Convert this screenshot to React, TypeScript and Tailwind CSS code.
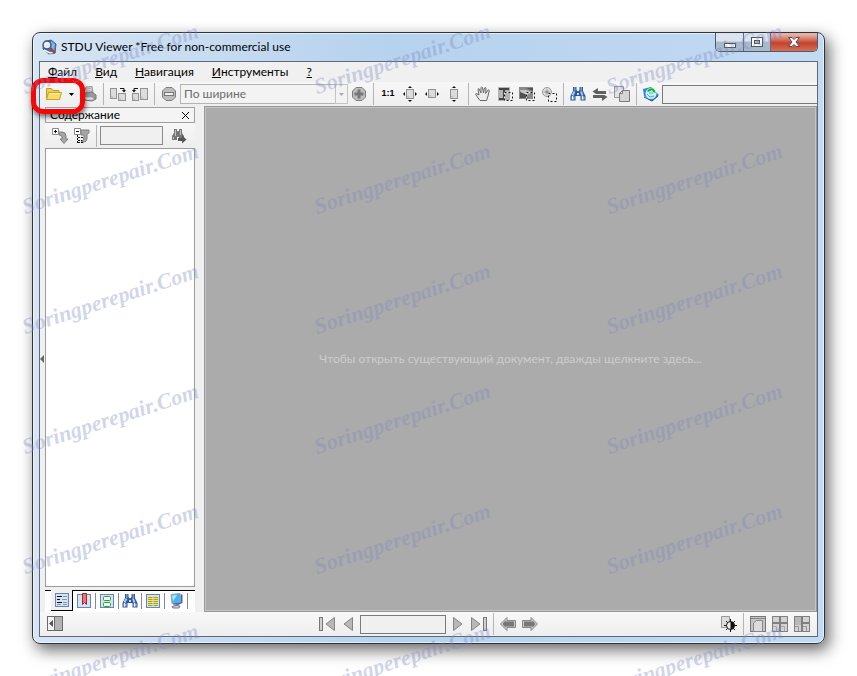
import type { ReactNode } from "react";

const watermarkRows = [0, 1, 2, 3, 4, 5];
const watermarkColumns = [0, 1, 2];

interface IconProps {
  children: ReactNode;
}

function Icon({ children }: IconProps) {
  return (
    <svg
      width="16"
      height="16"
      viewBox="0 0 16 16"
      fill="none"
      className="shrink-0"
      aria-hidden="true"
    >
      {children}
    </svg>
  );
}

interface ToolButtonProps {
  label: string;
  children: ReactNode;
}

function ToolButton({ label, children }: ToolButtonProps) {
  return (
    <button
      type="button"
      aria-label={label}
      className="flex h-6 w-[22px] shrink-0 items-center justify-center"
    >
      {children}
    </button>
  );
}

function Separator() {
  return (
    <div className="flex h-6 w-[7px] shrink-0 justify-center py-px">
      <div className="w-px bg-[#b5b5b5]" />
    </div>
  );
}

function Binoculars() {
  return (
    <Icon>
      <path d="M3 1h3.500v3L8 5.500 9.500 4V1H13v4l2.500 5v4.500h-5V10h-5v4.500h-5V10L3 5z" fill="#2d569c" />
      <path d="M4 2h1.500M10.500 2H12M4 4h1.500M10.500 4H12" stroke="#c4d8f4" />
      <path d="M4.500 5.500 2.500 9.500M11 5.500l1.500 4" stroke="#a9c8f2" strokeWidth="2" />
      <path d="M1.500 10.500h3v3h-3zM11.500 10.500h3v3h-3z" fill="#9bb8e2" />
      <path d="M2.500 10v3.500M12.500 10v3.500" stroke="#f4f8ff" />
      <path d="M7 7h2v2H7z" fill="#c9dbf4" />
    </Icon>
  );
}

function PageShape({ x, y, w, h }: { x: number; y: number; w: number; h: number }) {
  return (
    <>
      <rect x={x} y={y} width={w} height={h} fill="#dcdcdc" stroke="#929292" />
      <path d={`M${x + 1} ${y + h - 1}v-2l2 2z`} fill="#aaa" />
    </>
  );
}

function Marquee({ x, y }: { x: number; y: number }) {
  return (
    <>
      <rect x={x} y={y} width="8" height="8" stroke="#f4f4f4" />
      <rect x={x} y={y} width="8" height="8" stroke="#111" strokeDasharray="2 2" />
    </>
  );
}

function ZoomCircle({ plus }: { plus?: boolean }) {
  return (
    <Icon>
      <path
        d="M5 1.500h6L14.500 5v6L11 14.500H5L1.500 11V5z"
        fill="#bdbdbd"
        stroke="#7d7d7d"
      />
      {plus ? (
        <path d="M3.500 8h9M8 3.500v9" stroke="#777" strokeWidth="3" />
      ) : (
        <>
          <path d="M3 8h10" stroke="#777" strokeWidth="4" />
          <path d="M4 8h8" stroke="#efefef" strokeWidth="2" />
        </>
      )}
    </Icon>
  );
}

function AppLogo() {
  return (
    <Icon>
      <path d="m3 3 7-2 5 4-1 9-6 1-6-5z" fill="#3d78bb" stroke="#3a5f92" />
      <path d="m10 2 4 3-1 8-3-2z" fill="#7cb8ea" />
      <path d="m3 11 6 3 5-1" stroke="#eef3f8" strokeWidth="1.500" />
      <path d="m9 9 5 5" stroke="#a8442f" strokeWidth="2.500" />
      <circle cx="6" cy="6" r="4" fill="#dceefb" stroke="#4c5274" strokeWidth="1.500" />
      <path d="M4 5.500q1-2 3-1.500" stroke="#fff" />
    </Icon>
  );
}

function TitleBar() {
  return (
    <header className="flex h-7 shrink-0 items-center pl-0.5">
      <AppLogo />
      <h1 className="ml-1 flex-1 text-xs whitespace-nowrap">
        STDU Viewer *Free for non-commercial use
      </h1>
      <div className="flex h-[19px] self-start overflow-hidden rounded-b-[5px] border border-t-0 border-[#4b5a6c]">
        <button
          type="button"
          aria-label="Свернуть"
          className="flex w-7 items-center justify-center border-r border-[#5d6e83] bg-linear-to-b from-[#dbe4ee] from-45% to-[#a9b9cc] to-50% pt-1"
        >
          <svg width="12" height="10" viewBox="0 0 12 10" aria-hidden="true">
            <rect x=".5" y="4.500" width="11" height="4" fill="#fff" stroke="#4b5364" />
          </svg>
        </button>
        <button
          type="button"
          aria-label="Развернуть"
          className="flex w-[27px] items-center justify-center border-r border-[#5d6e83] bg-linear-to-b from-[#dbe4ee] from-45% to-[#a9b9cc] to-50%"
        >
          <svg width="12" height="10" viewBox="0 0 12 10" aria-hidden="true">
            <rect x=".5" y=".5" width="11" height="9" fill="#fff" stroke="#4b5364" />
            <rect x="3.500" y="3.500" width="5" height="3" fill="#a9b9cc" stroke="#4b5364" />
          </svg>
        </button>
        <button
          type="button"
          aria-label="Закрыть"
          className="flex w-[46px] items-center justify-center bg-linear-to-b from-[#e6b0a5] from-10% via-[#c4412c] via-55% to-[#d66f55]"
        >
          <svg width="12" height="10" viewBox="0 0 12 10" aria-hidden="true">
            <path
              d="M.500.500h3.500l2 2 2-2h3.500L8 5l3.500 4.500H8l-2-2-2 2H.500L4 5z"
              fill="#fff"
              stroke="#5a4a56"
            />
          </svg>
        </button>
      </div>
    </header>
  );
}

function MenuBar() {
  return (
    <nav className="flex h-5 shrink-0 items-center gap-[18px] pl-2 text-xs">
      <a href="#file"><u>Ф</u>айл</a>
      <a href="#view"><u>В</u>ид</a>
      <a href="#navigation"><u>Н</u>авигация</a>
      <a href="#tools"><u>И</u>нструменты</a>
      <a href="#help"><u>?</u></a>
    </nav>
  );
}

function OpenButton() {
  return (
    <div className="relative ml-[3px] flex shrink-0">
      <ToolButton label="Открыть">
        <Icon>
          <path d="M.500 13.500v-11h5l1.500 2h6v9z" fill="#f0cf52" stroke="#c59a1e" />
          <path d="m.500 13.500 2-7h13l-2 7z" fill="#f8dc68" stroke="#cda128" />
          <path d="M3.500 7.500h10" stroke="#fff3b8" />
        </Icon>
      </ToolButton>
      <button
        type="button"
        aria-label="Недавние файлы"
        className="flex w-[13px] items-center justify-center"
      >
        <svg width="5" height="3" viewBox="0 0 5 3" aria-hidden="true">
          <path d="M0 0h5L2.500 3z" fill="#000" />
        </svg>
      </button>
      <div className="pointer-events-none absolute -top-1 -left-3 z-10 h-9 w-[54px] rounded-xl border-[5px] border-[#f80606] shadow-[1px_3px_4px_rgba(0,0,0,0.5)]" />
    </div>
  );
}

function Toolbar() {
  return (
    <div className="flex h-6 shrink-0 items-center bg-linear-to-b from-[#f7f7f7] to-[#eeeeee]">
      <OpenButton />
      <ToolButton label="Печать">
        <Icon>
          <path d="m3 7 2-6 6-.500 1 6.500" fill="#d6d6d6" stroke="#909090" />
          <path d="m5 3 5-.500M5 5h6" stroke="#aaa" />
          <path d="M1 7.500 11 6l4 3v4l-4 2-8-1-2-2z" fill="#9a9a9a" stroke="#757575" />
          <path d="m4 11 7 .500 2 2-8 .500z" fill="#e0e0e0" />
        </Icon>
      </ToolButton>
      <Separator />
      <ToolButton label="Повернуть вправо">
        <Icon>
          <PageShape x={0.5} y={2.5} w={6} h={10} />
          <PageShape x={8.5} y={7.5} w={7} h={7} />
          <path d="M10 2.500h4v3" stroke="#111" />
          <path d="M12 4h4l-2 2.500z" fill="#111" />
        </Icon>
      </ToolButton>
      <ToolButton label="Повернуть влево">
        <Icon>
          <PageShape x={0.5} y={7.5} w={6} h={7} />
          <PageShape x={8.5} y={2.5} w={7} h={11} />
          <path d="M6 2.500H2v3" stroke="#111" />
          <path d="M0 4h4L2 6.500z" fill="#111" />
        </Icon>
      </ToolButton>
      <Separator />
      <ToolButton label="Уменьшить">
        <ZoomCircle />
      </ToolButton>
      <div className="relative flex h-5 w-[168px] shrink-0">
        <select
          aria-label="Масштаб"
          className="w-full appearance-none border border-[#b4b4b4] bg-[#f3f3f3] pl-[3px] text-xs text-[#6d6d6d]"
        >
          <option>По ширине</option>
        </select>
        <span className="pointer-events-none absolute inset-y-0 right-0 flex w-[13px] items-center justify-center border border-[#c4c4c4]">
          <svg width="5" height="3" viewBox="0 0 5 3" aria-hidden="true">
            <path d="M0 0h5L2.500 3z" fill="#aaa" />
          </svg>
        </span>
      </div>
      <ToolButton label="Увеличить">
        <ZoomCircle plus />
      </ToolButton>
      <Separator />
      <ToolButton label="Реальный размер">
        <span className="font-['Liberation_Sans',sans-serif] text-[9px] font-bold">
          1:1
        </span>
      </ToolButton>
      <ToolButton label="По размеру страницы">
        <Icon>
          <PageShape x={4.5} y={3.5} w={7} h={9} />
          <path d="M8 0 6 2h4zM8 16l-2-2h4zM1 8l2-2v4zM15 8l-2-2v4z" fill="#111" />
        </Icon>
      </ToolButton>
      <ToolButton label="По ширине">
        <Icon>
          <PageShape x={4.5} y={3.5} w={7} h={8} />
          <path d="m1 8 2-2v4zM15 8l-2-2v4z" fill="#111" />
        </Icon>
      </ToolButton>
      <ToolButton label="По высоте">
        <Icon>
          <PageShape x={4.5} y={3.5} w={7} h={9} />
          <path d="M8 0 6 2h4zM8 16l-2-2h4z" fill="#111" />
        </Icon>
      </ToolButton>
      <Separator />
      <ToolButton label="Рука">
        <Icon>
          <path
            d="M5 14.500 1 9q-1-1.500.500-1.500L4 9 3 3.500q0-1 1-.800L6 7V1.500q.500-1 1.500 0L8.500 7l1-5q1-1 1.500 0l-.300 5.500L13 4q1-.500 1.300.500L13 10l-1.500 4.500z"
            fill="#ececec"
            stroke="#666"
          />
        </Icon>
      </ToolButton>
      <ToolButton label="Выделить текст">
        <Icon>
          <rect x="1" y="1" width="12" height="14" fill="#b4b4b4" />
          <path d="M2 3h10M7 3v10M2 13h5" stroke="#444" strokeWidth="2" />
          <Marquee x={7.500} y={6.500} />
        </Icon>
      </ToolButton>
      <ToolButton label="Выделить изображение">
        <Icon>
          <rect y="1" width="14" height="12" fill="#8a8a8a" />
          <path d="M1 4h6l6 2-5 3 2 3-7-3z" fill="#c6c6c6" />
          <path d="m1 6 5 2 4 4H1zM7 2h7v3z" fill="#505050" />
          <Marquee x={7.500} y={6.500} />
        </Icon>
      </ToolButton>
      <ToolButton label="Увеличить область">
        <Icon>
          <circle cx="6" cy="6" r="4.500" fill="#dcdcdc" stroke="#999" />
          <path d="M3.500 6h5M6 3.500v5" stroke="#777" />
          <Marquee x={7.500} y={7.500} />
        </Icon>
      </ToolButton>
      <Separator />
      <ToolButton label="Найти">
        <Binoculars />
      </ToolButton>
      <ToolButton label="Перейти">
        <Icon>
          <path d="M6 2v3h8v3H6v1.500L.500 5.500zM10 15v-3H1V9h9V7.500l5.500 3.500z" fill="#606060" />
          <path d="M2 8.500h12" stroke="#f0f0f0" />
        </Icon>
      </ToolButton>
      <ToolButton label="Копировать">
        <Icon>
          <path d="M.500.500h9v11h-9z" fill="#e2e2e2" stroke="#999" />
          <path d="M5.500 7.500l3-3h7v11h-10z" fill="#d4d4d4" stroke="#7b7b7b" />
          <path d="M8.500 4.500v3h-3z" fill="#f8f8f8" stroke="#7b7b7b" />
        </Icon>
      </ToolButton>
      <Separator />
      <ToolButton label="Перевод">
        <Icon>
          <path d="m0 3 8-2 8 8-7 6-8-5z" fill="#2b87d0" />
          <path d="m1 11 8 4 6-5" stroke="#1f4f86" />
          <circle cx="8" cy="7.500" r="5.500" fill="#c6f1fb" />
          <path d="M4 5q3-4 7-2l2 4-3-1-1-2-4 2z" fill="#16b516" />
          <path d="m4 8 3 3 4-1M6 7h4" stroke="#45b0cf" />
        </Icon>
      </ToolButton>
      <input
        type="text"
        aria-label="Слово для перевода"
        className="h-[19px] min-w-0 flex-1 border border-r-0 border-[#7a7a7a] bg-[#f0f0f0] px-1 text-xs"
      />
    </div>
  );
}

function TabIcon({ children }: { children: ReactNode }) {
  return (
    <Icon>
      <rect x="1.500" y="1.500" width="13" height="13" fill="#d5e3f6" stroke="#6485b8" />
      {children}
    </Icon>
  );
}

const panelTabs = [
  {
    label: "Закладки",
    icon: (
      <TabIcon>
        <path d="M6.500.500h4v11l-2-2-2 2z" fill="#e87878" stroke="#a82424" />
      </TabIcon>
    ),
  },
  {
    label: "Эскизы",
    icon: (
      <TabIcon>
        <rect x="4.500" y="3.500" width="7" height="4" rx="1" fill="#f2fff0" stroke="#28a428" />
        <rect x="4.500" y="9.500" width="7" height="4" rx="1" fill="#f2fff0" stroke="#28a428" />
      </TabIcon>
    ),
  },
  { label: "Поиск", icon: <Binoculars /> },
  {
    label: "Выделения",
    icon: (
      <TabIcon>
        <path d="M3 3h10v10H3z" fill="#f7ea3c" />
        <path d="M3 4.500h10M3 6.500h10M3 8.500h10M3 10.500h10M3 12.500h10" stroke="#a19a58" />
        <path d="M8 3v10" stroke="#d5e3f6" />
      </TabIcon>
    ),
  },
  {
    label: "Компьютер",
    icon: (
      <Icon>
        <path d="m3 1.500 9-1 1.500 9L4 10.500z" fill="#48b4ee" stroke="#8fa0c8" />
        <path d="m4 2.500 5-.500-4 6z" fill="#b5e6fb" />
        <path d="m13 1 1.500 1v8L10 12l-5-.500v-1l8-1z" fill="#57609a" />
        <path d="M4 13.500q4-2 8-.500l-1 2H5z" fill="#d0d0dc" stroke="#777a9a" />
      </Icon>
    ),
  },
];

function ContentsPanel() {
  return (
    <aside className="flex w-[150px] shrink-0 flex-col">
      <div className="mt-px flex h-4 shrink-0 items-center border border-[#a0a0a0] bg-[#f4f4f4] pr-1 pl-1">
        <h2 className="flex-1 text-xs leading-[14px]">Содержание</h2>
        <button type="button" aria-label="Закрыть панель">
          <svg width="9" height="9" viewBox="0 0 9 9" aria-hidden="true">
            <path d="m1 1 7 7M8 1 1 8" stroke="#000" />
          </svg>
        </button>
      </div>
      <div className="flex h-[25px] shrink-0 items-center bg-linear-to-b from-[#f7f7f7] to-[#eeeeee] pl-1">
        <ToolButton label="Развернуть всё">
          <Icon>
            <path d="M7 4h3q4 0 4 4v3h2l-4 4.500L8 11h2V9q0-2-3-2z" fill="#a6a6a6" stroke="#808080" />
            <path d="M.500.500h6v6h-6z" fill="#fff" stroke="#888" />
            <path d="M2 3.500h3M3.500 2v3" stroke="#111" />
          </Icon>
        </ToolButton>
        <ToolButton label="Свернуть всё">
          <Icon>
            <path d="M7 2h8v3l-2 1v5q-1 4-6 3 3-2 3-5V7H7z" fill="#a6a6a6" stroke="#808080" />
            <path d="M.500.500h6v6h-6z" fill="#fff" stroke="#888" />
            <path d="M2 3.500h3" stroke="#111" />
            <path d="M3.500 7v8M4 9.500h5M4 12.500h4M4 14.500h6" stroke="#111" strokeDasharray="2 1" />
          </Icon>
        </ToolButton>
        <Separator />
        <input
          type="text"
          aria-label="Поиск в содержании"
          className="h-[19px] w-[63px] border border-[#8a8a8a] bg-[#f0f0f0] px-1 text-xs"
        />
        <div className="flex flex-1 justify-center">
          <ToolButton label="Найти далее">
            <Icon>
              <path d="M3 1h3v2h2V1h3v4l2 3v4H8V9H6v3H1V8l2-3z" fill="#777" />
              <path d="M4.500 2v6M9.500 2v5M2.500 9v2" stroke="#c2c2c2" />
              <path d="M7 10h4V7.500l4.500 4-4.500 4V13H7z" fill="#555" />
            </Icon>
          </ToolButton>
        </div>
      </div>
      <div className="flex-1 border border-[#9c9c9c] bg-white" />
      <div className="mt-[3px] flex h-[22px] shrink-0 items-start bg-white">
        <div className="h-px w-1.5 bg-black" />
        <button
          type="button"
          aria-label="Содержание"
          className="flex h-[21px] w-[22px] items-center justify-center border-r border-b border-black bg-[#f0f0f0]"
        >
          <TabIcon>
            <path d="M3 4.500h5M3 7.500h3M3 10.500h5" stroke="#111" />
            <path d="M3 12.500h4M9 4.500h4M8 7.500h5M9 10.500h4M9 12.500h4" stroke="#8a94a5" />
          </TabIcon>
        </button>
        <div className="flex h-[21px] flex-1 border-t border-black">
          {panelTabs.map((tab) => (
            <button
              key={tab.label}
              type="button"
              aria-label={tab.label}
              className="flex w-[23px] items-center justify-center"
            >
              <span className="flex flex-1 justify-center">{tab.icon}</span>
              <span className="h-4 w-px bg-[#8a8a8a]" />
            </button>
          ))}
        </div>
      </div>
    </aside>
  );
}

function PageArrow({ left, bar }: { left?: boolean; bar?: boolean }) {
  return (
    <Icon>
      <g className={left ? "origin-center -scale-x-100" : undefined}>
        <path
          d={bar ? "M.500 1.500v13L9 8z" : "M4.500 1.500v13L13 8z"}
          fill="#b8b8b8"
          stroke="#858585"
        />
        {bar && <rect x="12.500" y="1.500" width="3" height="13" fill="#d0d0d0" stroke="#777" />}
      </g>
    </Icon>
  );
}

function HistoryArrow({ left }: { left?: boolean }) {
  return (
    <Icon>
      <g className={left ? "origin-center -scale-x-100" : undefined}>
        <path d="M.500 4.500H9v-3L15.500 8 9 14.500v-3H.500z" fill="#ccc" stroke="#888" />
        <path d="M2 5.500h8.500V4.500L13.500 8l-3 3.500v-1H2z" fill="#777" />
      </g>
    </Icon>
  );
}

function StatusBar() {
  return (
    <footer className="flex h-6 shrink-0 items-center bg-linear-to-b from-[#f8f8f8] to-[#eeeeee] px-1">
      <div className="flex flex-1">
        <ToolButton label="Скрыть панель">
          <Icon>
            <rect x=".5" y=".5" width="15" height="14" fill="#f4f4f4" stroke="#6a6a6a" />
            <path d="M8 1h7v13H8z" fill="#b4b4b4" />
            <path d="M7.500 1v13" stroke="#6a6a6a" />
            <path d="M6 4v7L2 7.500z" fill="#555" />
          </Icon>
        </ToolButton>
      </div>
      <div className="flex items-center">
        <ToolButton label="Первая страница">
          <PageArrow left bar />
        </ToolButton>
        <ToolButton label="Предыдущая страница">
          <PageArrow left />
        </ToolButton>
        <input
          type="text"
          aria-label="Номер страницы"
          className="h-[19px] w-[86px] border border-[#7a7a7a] bg-[#f0f0f0] px-1 text-xs"
        />
        <ToolButton label="Следующая страница">
          <PageArrow />
        </ToolButton>
        <ToolButton label="Последняя страница">
          <PageArrow bar />
        </ToolButton>
        <Separator />
        <ToolButton label="Назад">
          <HistoryArrow left />
        </ToolButton>
        <ToolButton label="Вперёд">
          <HistoryArrow />
        </ToolButton>
      </div>
      <div className="flex flex-1 justify-end">
        <ToolButton label="Яркость">
          <Icon>
            <path d="M.500.500h8v11h-8z" fill="#ddd" stroke="#999" />
            <path
              d="M9.500 3v13M3 9.500h13M5 5l9 9M14 5l-9 9"
              stroke="#111"
            />
            <circle cx="9.500" cy="9.500" r="4" fill="#eee" stroke="#111" />
            <path d="M9.500 5.500a4 4 0 0 1 0 8z" fill="#111" />
          </Icon>
        </ToolButton>
        <Separator />
        <ToolButton label="Одна страница">
          <Icon>
            <rect x=".5" y=".5" width="15" height="15" fill="#c4c4c4" stroke="#777" />
            <path d="M1 2.500h14" stroke="#888" />
            <path d="M3.500 15.500V7l3-2.500h6v11z" fill="#dcdcdc" stroke="#888" />
          </Icon>
        </ToolButton>
        <ToolButton label="Четыре страницы">
          <Icon>
            <rect x=".5" y=".5" width="15" height="15" fill="#d2d2d2" stroke="#808080" />
            <path d="M8 1v14M1 7h14" stroke="#808080" strokeWidth="2" />
            <path d="M1 10.500h3.500V15M9 10.500h3.500V15" stroke="#aaa" />
          </Icon>
        </ToolButton>
        <ToolButton label="Разворот">
          <Icon>
            <rect x=".5" y=".5" width="15" height="15" fill="#d2d2d2" stroke="#808080" />
            <path d="M1 1h6v8H1z" fill="#b8b8b8" />
            <path d="M8 1v14M9 7h6" stroke="#808080" strokeWidth="2" />
            <path d="M1 10.500h3.500V15M9 10.500h3.500V15" stroke="#999" />
          </Icon>
        </ToolButton>
      </div>
    </footer>
  );
}

function Watermark() {
  return (
    <div
      aria-hidden="true"
      className="pointer-events-none absolute inset-0 z-20 overflow-hidden pt-[77px] pl-[26px]"
    >
      {watermarkRows.map((row) => (
        <div key={row} className="flex h-[120px]">
          {watermarkColumns.map((column) => (
            <span
              key={column}
              className="h-5 w-[292px] shrink-0 origin-bottom-left -rotate-[18deg] font-['Liberation_Serif',serif] text-[22px] leading-5 font-bold text-[#7b86c0]/35 italic"
            >
              Soringperepair.Com
            </span>
          ))}
        </div>
      ))}
    </div>
  );
}

export default function App() {
  return (
    <div className="relative flex h-screen overflow-hidden bg-white p-8 font-['Lato','Open_Sans',sans-serif] text-black">
      <main className="flex min-w-0 flex-1 flex-col rounded-lg border border-[#2c3440] bg-linear-to-r from-[#d6e5f4] via-[#b6d2ed] via-45% to-[#c2daf2] px-1.5 pb-1.5 shadow-[4px_6px_16px_rgba(0,0,0,0.6),inset_0_0_0_1px_rgba(255,255,255,0.6)]">
        <TitleBar />
        <div className="flex min-h-0 flex-1 flex-col border border-[#5b6b7d] bg-[#f0f0f0]">
          <MenuBar />
          <Toolbar />
          <div className="flex min-h-0 flex-1">
            <button
              type="button"
              aria-label="Свернуть панель"
              className="flex w-[5px] shrink-0 items-center"
            >
              <svg width="4" height="8" viewBox="0 0 4 8" aria-hidden="true">
                <path d="M4 0v8L0 4z" fill="#666" />
              </svg>
            </button>
            <ContentsPanel />
            <section className="ml-[9px] flex min-w-0 flex-1 items-center justify-center border border-[#989898] bg-[#ababab] shadow-[inset_0_0_0_1px_#c4c4c4]">
              <p className="text-xs text-[#cdcdcd]">
                Чтобы открыть существующий документ, дважды щелкните здесь...
              </p>
            </section>
          </div>
          <StatusBar />
        </div>
      </main>
      <Watermark />
    </div>
  );
}
